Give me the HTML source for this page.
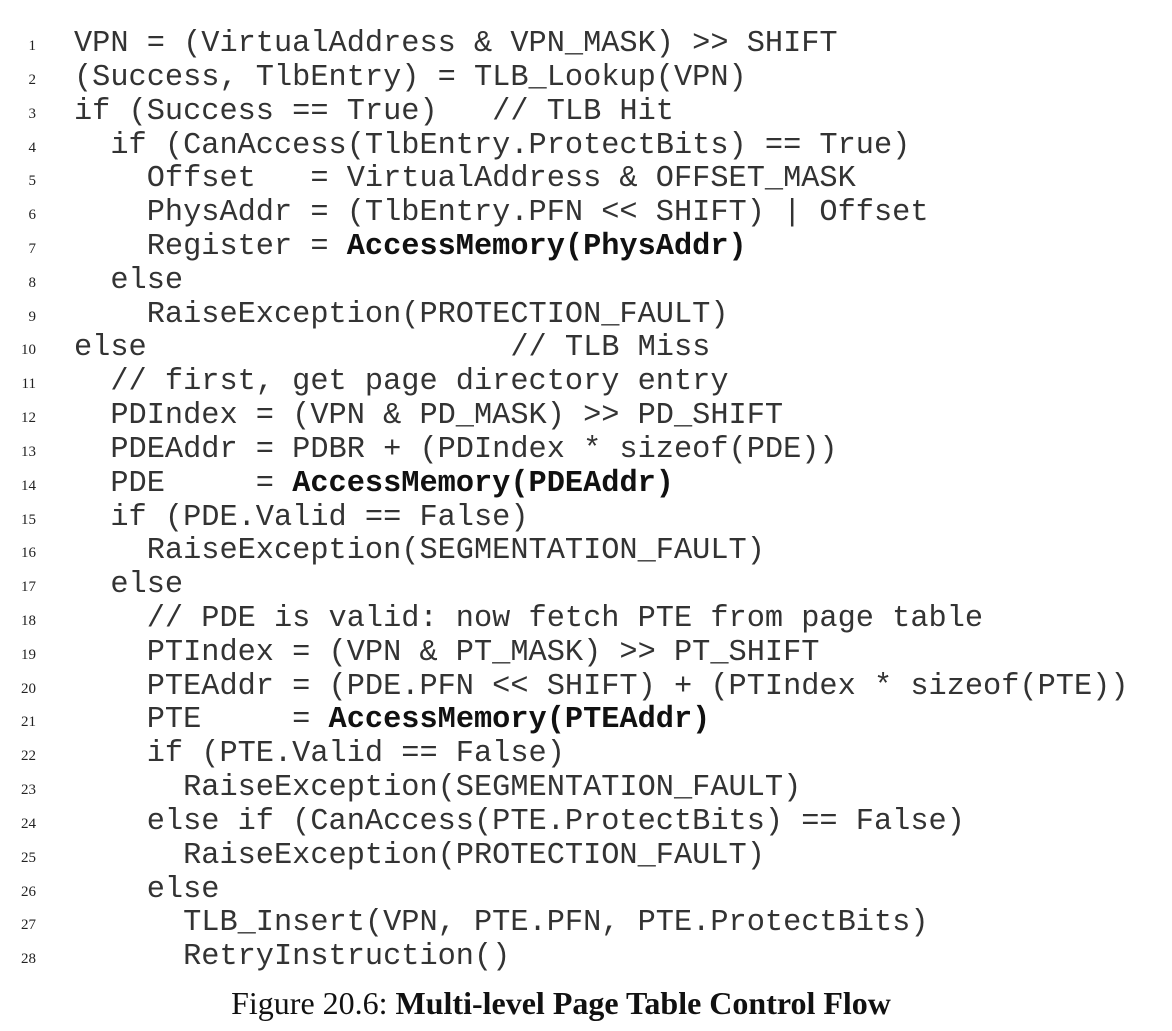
<!DOCTYPE html>
<html><head><meta charset="utf-8"><style>
html,body{margin:0;padding:0;background:#fff;}
body{width:1172px;height:1031px;position:relative;overflow:hidden;color:#222;}
.l{position:absolute;left:74px;height:34px;line-height:34px;font-family:"Liberation Mono",monospace;font-size:30.3px;white-space:pre;color:#333;}
.n{position:absolute;left:0;width:36px;text-align:right;height:34px;line-height:34px;font-family:"Liberation Serif",serif;font-size:15px;color:#222;}
b{font-weight:bold;color:#111;}
.cap{position:absolute;left:0;width:1122px;text-align:center;top:985px;font-family:"Liberation Serif",serif;font-size:32px;color:#111;}
</style></head><body>
<div id="c"></div>
<script>
var L=[
"VPN = (VirtualAddress &amp; VPN_MASK) &gt;&gt; SHIFT",
"(Success, TlbEntry) = TLB_Lookup(VPN)",
"if (Success == True)   // TLB Hit",
"  if (CanAccess(TlbEntry.ProtectBits) == True)",
"    Offset   = VirtualAddress &amp; OFFSET_MASK",
"    PhysAddr = (TlbEntry.PFN &lt;&lt; SHIFT) | Offset",
"    Register = <b>AccessMemory(PhysAddr)</b>",
"  else",
"    RaiseException(PROTECTION_FAULT)",
"else                    // TLB Miss",
"  // first, get page directory entry",
"  PDIndex = (VPN &amp; PD_MASK) &gt;&gt; PD_SHIFT",
"  PDEAddr = PDBR + (PDIndex * sizeof(PDE))",
"  PDE     = <b>AccessMemory(PDEAddr)</b>",
"  if (PDE.Valid == False)",
"    RaiseException(SEGMENTATION_FAULT)",
"  else",
"    // PDE is valid: now fetch PTE from page table",
"    PTIndex = (VPN &amp; PT_MASK) &gt;&gt; PT_SHIFT",
"    PTEAddr = (PDE.PFN &lt;&lt; SHIFT) + (PTIndex * sizeof(PTE))",
"    PTE     = <b>AccessMemory(PTEAddr)</b>",
"    if (PTE.Valid == False)",
"      RaiseException(SEGMENTATION_FAULT)",
"    else if (CanAccess(PTE.ProtectBits) == False)",
"      RaiseException(PROTECTION_FAULT)",
"    else",
"      TLB_Insert(VPN, PTE.PFN, PTE.ProtectBits)",
"      RetryInstruction()"];
var h="";
for(var i=0;i<L.length;i++){var t=(27+i*33.82).toFixed(1);
h+='<div class="n" style="top:'+(+t+2)+'px">'+(i+1)+'</div><div class="l" style="top:'+t+'px">'+L[i]+'</div>';}
document.getElementById("c").innerHTML=h;
</script>
<div class="cap">Figure 20.6: <b>Multi-level Page Table Control Flow</b></div>
</body></html>
